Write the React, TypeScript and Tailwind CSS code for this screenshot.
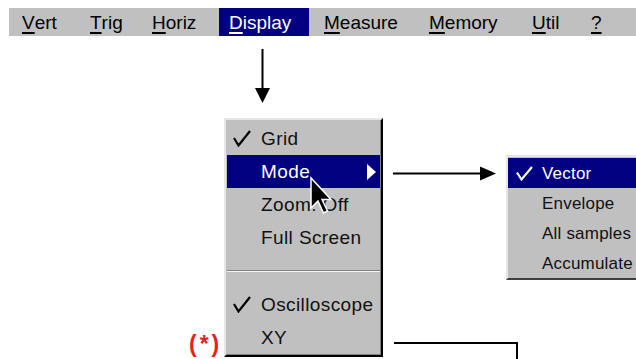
import React from "react";

const font = { fontFamily: '"Liberation Sans", Arial, sans-serif' };

function BarItem({ label, w, active }: { label: string; w: string; active?: boolean }) {
  return (
    <div
      className={`${w} h-full flex items-center pt-[1px] ${active ? "bg-[#000080] text-white pl-[10px]" : "text-black"}`}
    >
      <span className="underline decoration-[2px] underline-offset-[3px]">{label[0]}</span>
      <span>{label.slice(1)}</span>
    </div>
  );
}

function Check({ white }: { white?: boolean }) {
  return (
    <svg width="18" height="17" viewBox="0 0 18 17" className="block">
      <polyline
        points="1,8 5.5,15.5 17,1"
        fill="none"
        stroke={white ? "#fff" : "#000"}
        strokeWidth="2.2"
        strokeLinejoin="miter"
      />
    </svg>
  );
}

function Row({
  label,
  checked,
  active,
  sub,
}: {
  label: string;
  checked?: boolean;
  active?: boolean;
  sub?: boolean;
}) {
  return (
    <div
      className={`relative h-[33px] mx-[1px] flex items-center ${active ? "bg-[#000080] text-white" : "text-[#111]"}`}
    >
      <div className="w-[34px] flex justify-start pl-[6px]">{checked && <Check white={active} />}</div>
      <span className="tracking-[0.4px]">{label}</span>
      {sub && (
        <svg width="10" height="16" viewBox="0 0 10 16" className="absolute left-[140px] top-[9px]">
          <polygon points="0,0 9,8 0,16" fill="#fff" />
        </svg>
      )}
    </div>
  );
}

function SubRow({ label, checked, active }: { label: string; checked?: boolean; active?: boolean }) {
  return (
    <div className={`h-[30px] flex items-center ${active ? "bg-[#000080] text-white" : "text-[#111]"}`}>
      <div className="w-[34px] pl-[8px]">
        {checked && (
          <svg width="17" height="15" viewBox="0 0 17 15" className="block">
            <polyline points="1,6.5 5.5,13.5 16,1" fill="none" stroke="#fff" strokeWidth="2.1" />
          </svg>
        )}
      </div>
      <span className="tracking-[0.2px] whitespace-nowrap">{label}</span>
    </div>
  );
}

export default function App() {
  return (
    <div className="relative w-[636px] h-[359px] bg-white overflow-hidden" style={font}>
      {/* Menu bar */}
      <div className="mt-[8px] ml-[9px] h-[28px] bg-[#c0c0c0] flex items-stretch pl-[13px] text-[19px] leading-none">
        <BarItem label="Vert" w="w-[68px]" />
        <BarItem label="Trig" w="w-[62px]" />
        <BarItem label="Horiz" w="w-[67px]" />
        <BarItem label="Display" w="w-[90px]" active />
        <div className="w-[15px]" />
        <BarItem label="Measure" w="w-[105px]" />
        <BarItem label="Memory" w="w-[103px]" />
        <BarItem label="Util" w="w-[59px]" />
        <BarItem label="?" w="w-[20px]" />
      </div>

      {/* Down arrow */}
      <svg width="22" height="56" viewBox="0 0 22 56" className="absolute left-[252px] top-[49px]">
        <line x1="10.5" y1="0" x2="10.5" y2="42" stroke="#000" strokeWidth="2" />
        <polygon points="3,39 18,39 10.5,54" fill="#000" />
      </svg>

      {/* Display dropdown */}
      <div className="absolute left-[224px] top-[118px] w-[159px] h-[239px] bg-[#c0c0c0] border-t-2 border-l-2 border-r-2 border-b-2 border-t-[#e6e6e6] border-l-[#e6e6e6] border-r-black border-b-black shadow-[inset_-1px_-1px_0_#808080] text-[19px] leading-none">
        <div className="pt-[2px]">
          <Row label="Grid" checked />
          <Row label="Mode" active sub />
          <Row label="Zoom: Off" />
          <Row label="Full Screen" />
          <div className="h-[34px] flex flex-col justify-center mx-[1px]">
            <div className="h-[1px] bg-[#808080]" />
            <div className="h-[1px] bg-[#f4f4f4]" />
          </div>
          <Row label="Oscilloscope" checked />
          <Row label="XY" />
        </div>
      </div>

      {/* Mouse cursor */}
      <svg width="24" height="40" viewBox="0 0 24 40" className="absolute left-[309px] top-[176px]">
        <polygon
          points="2,2 2,32 9,25 14.5,37 18.5,35 13,23.5 22,23.5"
          fill="#000"
          stroke="#fff"
          strokeWidth="1.5"
          strokeLinejoin="miter"
        />
      </svg>

      {/* Right arrow */}
      <svg width="106" height="18" viewBox="0 0 106 18" className="absolute left-[393px] top-[165px]">
        <line x1="0" y1="8.5" x2="90" y2="8.5" stroke="#000" strokeWidth="2" />
        <polygon points="87,1.5 87,15.5 103,8.5" fill="#000" />
      </svg>

      {/* Mode submenu */}
      <div className="absolute left-[506px] top-[155px] w-[140px] h-[125px] bg-[#c0c0c0] border-t-2 border-l-2 border-b-2 border-t-[#e6e6e6] border-l-[#e6e6e6] border-b-[#404040] text-[17px] leading-none">
        <div className="pt-[1px]">
          <SubRow label="Vector" checked active />
          <SubRow label="Envelope" />
          <SubRow label="All samples" />
          <SubRow label="Accumulate" />
        </div>
      </div>

      {/* XY connector */}
      <svg width="126" height="26" viewBox="0 0 126 26" className="absolute left-[394px] top-[334px]">
        <polyline points="0,9 123,9 123,26" fill="none" stroke="#000" strokeWidth="2" />
      </svg>

      {/* (*) */}
      <div className="absolute left-[189px] top-[333px] text-[23px] font-bold leading-none text-[#e8211c] tracking-[3px]">
        (*)
      </div>
    </div>
  );
}
